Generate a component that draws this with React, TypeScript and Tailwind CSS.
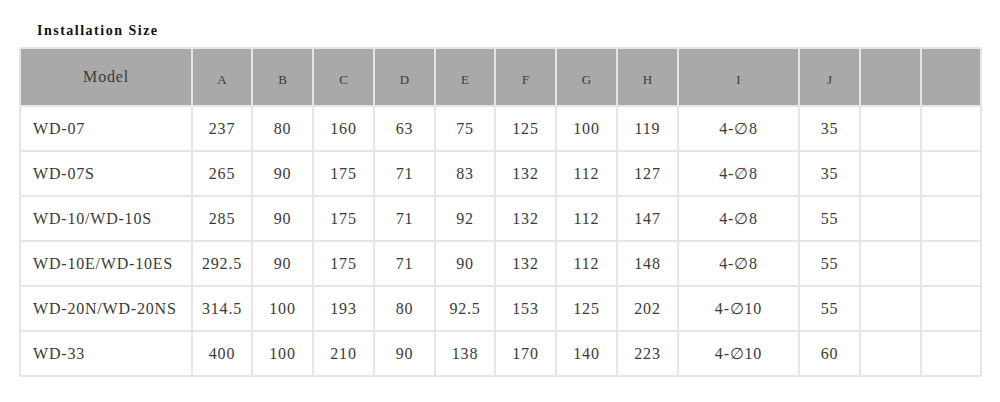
const headers = ['A', 'B', 'C', 'D', 'E', 'F', 'G', 'H', 'I', 'J', '', ''];

const rows: string[][] = [
  ['WD-07', '237', '80', '160', '63', '75', '125', '100', '119', '4-∅8', '35', '', ''],
  ['WD-07S', '265', '90', '175', '71', '83', '132', '112', '127', '4-∅8', '35', '', ''],
  ['WD-10/WD-10S', '285', '90', '175', '71', '92', '132', '112', '147', '4-∅8', '55', '', ''],
  ['WD-10E/WD-10ES', '292.5', '90', '175', '71', '90', '132', '112', '148', '4-∅8', '55', '', ''],
  ['WD-20N/WD-20NS', '314.5', '100', '193', '80', '92.5', '153', '125', '202', '4-∅10', '55', '', ''],
  ['WD-33', '400', '100', '210', '90', '138', '170', '140', '223', '4-∅10', '60', '', ''],
];

export default function App() {
  return (
    <div
      className="h-[402px] w-[1000px] bg-white pl-[19px] pt-[22px] text-[#3a3a3a]"
      style={{ fontFamily: '"Liberation Serif", "Times New Roman", serif' }}
    >
      <h2 className="pl-[18px] text-[14px] font-bold leading-[18px] tracking-[1.5px] text-[#111]">
        Installation Size
      </h2>

      <div className="mt-[7px] grid w-[963px] grid-cols-[170px_58px_59px_59px_59px_58px_59px_59px_59px_119px_59px_59px_58px] gap-[2px] bg-[#e6e6e6] p-[2px]">
        <div className="flex h-[56px] items-center justify-center bg-[#a9a9a9] text-[16px] tracking-[0.8px]">
          Model
        </div>
        {headers.map((h, i) => (
          <div key={i} className="flex h-[56px] items-center justify-center bg-[#a9a9a9] pt-[6px] text-[13px]">
            {h}
          </div>
        ))}

        {rows.map((r, ri) =>
          r.map((c, ci) => (
            <div
              key={`${ri}-${ci}`}
              className={
                ci === 0
                  ? 'flex h-[43px] items-center bg-white pl-[12px] text-[16px] tracking-[0.8px]'
                  : 'flex h-[43px] items-center justify-center bg-white text-[16px] tracking-[0.8px]'
              }
            >
              {c}
            </div>
          ))
        )}
      </div>
    </div>
  );
}
